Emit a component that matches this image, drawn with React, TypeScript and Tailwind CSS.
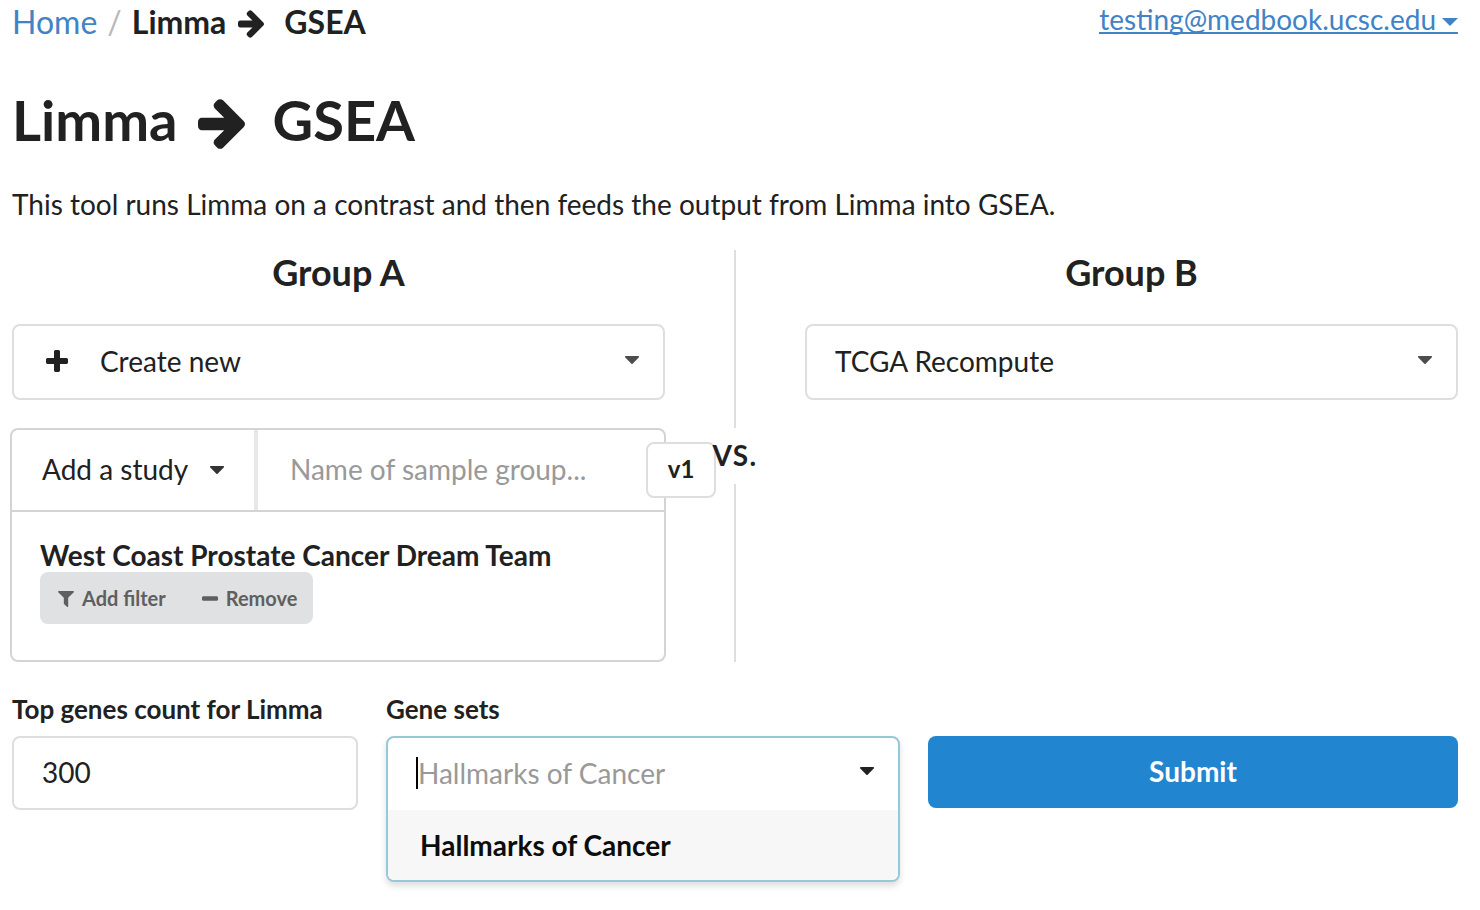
import React from 'react';

type IconProps = { className?: string };

function ArrowRight({ className }: IconProps) {
  return (
    <svg viewBox="0 181 1472 1558" className={className} fill="currentColor" aria-hidden="true">
      <path d="M1472 960q0 54-37 91l-651 651q-39 37-91 37-51 0-90-37l-75-75q-38-38-38-91t38-91l293-293h-704q-52 0-84.500-37.500t-32.500-90.500v-128q0-53 32.500-90.500t84.500-37.500h704l-293-294q-38-36-38-90t38-90l75-75q38-38 90-38 53 0 91 38l651 651q37 35 37 90z" />
    </svg>
  );
}

function Plus({ className }: IconProps) {
  return (
    <svg viewBox="192 128 1408 1408" className={className} fill="currentColor" aria-hidden="true">
      <path d="M1600 736v192q0 40-28 68t-68 28h-416v416q0 40-28 68t-68 28h-192q-40 0-68-28t-28-68v-416h-416q-40 0-68-28t-28-68v-192q0-40 28-68t68-28h416v-416q0-40 28-68t68-28h192q40 0 68 28t28 68v416h416q40 0 68 28t28 68z" />
    </svg>
  );
}

function Minus({ className }: IconProps) {
  return (
    <svg viewBox="192 640 1408 384" className={className} fill="currentColor" aria-hidden="true">
      <path d="M1600 736v192q0 40-28 68t-68 28h-1216q-40 0-68-28t-28-68v-192q0-40 28-68t68-28h1216q40 0 68 28t28 68z" />
    </svg>
  );
}

function Filter({ className }: IconProps) {
  return (
    <svg viewBox="192 256 1408 1408" className={className} fill="currentColor" aria-hidden="true">
      <path d="M1595 295q17 41-14 70l-493 493v742q0 42-39 59-13 5-25 5-27 0-45-19l-256-256q-19-19-19-45v-486l-493-493q-31-29-14-70 17-39 59-39h1280q42 0 59 39z" />
    </svg>
  );
}

function Caret({ className }: IconProps) {
  return (
    <svg viewBox="384 640 1024 576" className={className} fill="currentColor" aria-hidden="true">
      <path d="M1408 704q0 26-19 45l-448 448q-19 19-45 19t-45-19l-448-448q-19-19-19-45t19-45 45-19h896q26 0 45 19t19 45z" />
    </svg>
  );
}

export default function App() {
  return (
    <div className="bg-white pl-3 pr-[22px] pb-7 font-['Lato',sans-serif] text-[28px] text-[#212121]">
      <header className="flex items-start justify-between">
        <nav aria-label="Breadcrumb" className="flex items-center text-[32px] leading-[44px]">
          <a href="#home" className="text-[#4183c4]">Home</a>
          <span className="mx-2.5 text-[#b8b8b8]">/</span>
          <span className="flex items-center font-bold">
            Limma
            <ArrowRight className="ml-3 mr-5 mt-1 h-7 w-[26px]" />
            GSEA
          </span>
        </nav>
        <a href="#account" className="flex h-[34px] items-start border-b-2 border-[#4183c4] leading-[38px] text-[#4183c4]">
          testing@medbook.ucsc.edu
          <svg viewBox="0 0 16 8" className="ml-1.5 mt-[18px] h-2 w-4" fill="currentColor" aria-hidden="true">
            <path d="M0 0h16l-8 8z" />
          </svg>
        </a>
      </header>

      <main>
        <h1 className="mt-10 flex items-center text-[56px] font-bold leading-[72px]">
          Limma
          <ArrowRight className="ml-5 mr-7 mt-2 h-[50px] w-[47px]" />
          GSEA
        </h1>
        <p className="mt-7 leading-10">
          This tool runs Limma on a contrast and then feeds the output from Limma into GSEA.
        </p>

        <section className="mt-[26px] flex">
          <div className="min-w-0 flex-1">
            <h2 className="text-center text-[36px] font-bold leading-[44px]">
              <label htmlFor="group-a">Group A</label>
            </h2>
            <div className="relative mt-[30px]">
              <select id="group-a" className="h-[76px] w-full appearance-none rounded-lg border-2 border-[#dedede] bg-white pb-0.5 pl-[86px] pr-16 outline-none">
                <option>Create new</option>
              </select>
              <Plus className="pointer-events-none absolute left-[34px] top-[26px] size-[22px]" />
              <Caret className="pointer-events-none absolute right-[26px] top-8 h-2 w-3.5 text-[#4d4d4d]" />
            </div>

            <div className="-ml-0.5 -mr-px mt-7 rounded-lg border-2 border-[#d4d4d5]">
              <div className="relative flex h-[82px] border-b-2 border-[#d4d4d5]">
                <div className="relative w-[246px] border-r-4 border-[#e8e8e8]">
                  <select aria-label="Add a study" className="h-full w-full appearance-none rounded-tl-lg bg-white pb-0.5 pl-[30px] outline-none">
                    <option>Add a study</option>
                  </select>
                  <Caret className="pointer-events-none absolute right-[30px] top-9 h-2 w-3.5 text-[#333333]" />
                </div>
                <input
                  type="text"
                  aria-label="Name of sample group"
                  placeholder="Name of sample group..."
                  className="min-w-0 flex-1 pb-0.5 pl-8 pr-[72px] outline-none placeholder:text-[#999999]"
                />
                <span className="absolute -right-[52px] top-3 flex h-14 w-[70px] items-center justify-center rounded-lg border-2 border-[#dedede] bg-white pb-0.5 text-2xl font-bold">
                  v1
                </span>
              </div>
              <div className="px-7 pb-9 pt-6">
                <h3 className="pt-0.5 font-bold leading-[34px]">West Coast Prostate Cancer Dream Team</h3>
                <div className="inline-flex h-[52px] rounded-lg bg-[#e0e1e2] align-top text-xl font-bold text-[#5f5f60]">
                  <button type="button" className="flex items-center gap-2 px-[18px]">
                    <Filter className="mt-0.5 size-4" />
                    Add filter
                  </button>
                  <button type="button" className="flex items-center gap-2 pl-[18px] pr-4">
                    <Minus className="h-[5px] w-4" />
                    Remove
                  </button>
                </div>
              </div>
            </div>
          </div>

          <div className="relative z-10 flex w-[140px] flex-col items-center font-bold">
            <div className="w-0.5 flex-1 bg-[#dedede]" />
            <div className="flex h-14 items-center pb-0.5 tracking-wider">VS.</div>
            <div className="w-0.5 flex-1 bg-[#dedede]" />
          </div>

          <div className="min-w-0 flex-1">
            <h2 className="text-center text-[36px] font-bold leading-[44px]">
              <label htmlFor="group-b">Group B</label>
            </h2>
            <div className="relative mt-[30px]">
              <select id="group-b" className="h-[76px] w-full appearance-none rounded-lg border-2 border-[#dedede] bg-white pb-0.5 pl-7 pr-16 outline-none">
                <option>TCGA Recompute</option>
              </select>
              <Caret className="pointer-events-none absolute right-[26px] top-8 h-2 w-3.5 text-[#4d4d4d]" />
            </div>
          </div>
        </section>

        <form className="mt-7 grid grid-cols-[346fr_514fr_530fr] items-start gap-7">
          <div className="min-w-0">
            <label htmlFor="gene-count" className="block text-[26px] font-bold leading-[38px]">
              Top genes count for Limma
            </label>
            <input
              id="gene-count"
              type="text"
              defaultValue="300"
              className="mt-2 h-[74px] w-full rounded-lg border-2 border-[#dedede] px-7 pb-0.5 outline-none"
            />
          </div>
          <div className="min-w-0">
            <label htmlFor="gene-sets" className="block text-[26px] font-bold leading-[38px]">
              Gene sets
            </label>
            <div className="mt-2 overflow-hidden rounded-lg border-2 border-[#96c8da] bg-white shadow-[0_4px_6px_rgba(34,36,38,0.15)]">
              <div className="flex h-[72px] items-center pb-0.5 pl-7 pr-6">
                <span className="h-8 w-0.5 bg-black" />
                <input
                  id="gene-sets"
                  type="text"
                  placeholder="Hallmarks of Cancer"
                  className="min-w-0 flex-1 outline-none placeholder:text-[#999999]"
                />
                <Caret className="mb-1 h-2 w-3.5" />
              </div>
              <div role="listbox" aria-label="Gene sets">
                <div role="option" aria-selected="true" className="flex h-[70px] items-center bg-[#f7f7f7] px-8 font-bold text-[#0d0d0d]">
                  Hallmarks of Cancer
                </div>
              </div>
            </div>
          </div>
          <button type="button" className="mt-[46px] h-[72px] rounded-lg bg-[#2185d0] pb-0.5 font-bold text-white">
            Submit
          </button>
        </form>
      </main>
    </div>
  );
}
